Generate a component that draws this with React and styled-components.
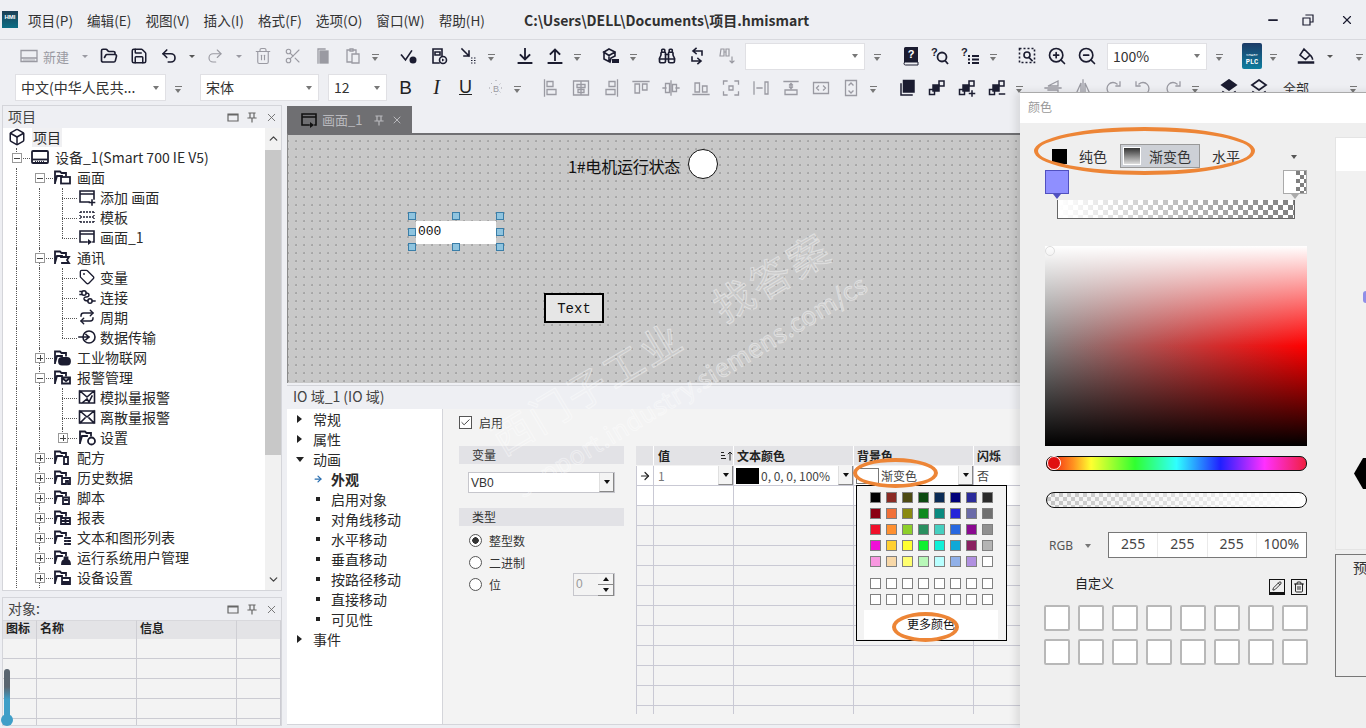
import React from 'react';
import styled, { createGlobalStyle } from 'styled-components';
import {
  Box, FolderOpen, Save, Undo2, Redo2, Trash2, Scissors, Tag, Repeat, ChevronUp, ChevronDown,
  X, Minus, ZoomIn, ZoomOut, Binoculars, Pencil, ArrowRight, Check,
} from 'lucide-react';

const UI_FONT = `"Noto Sans CJK SC", "Noto Sans", sans-serif`;
const INK = '#1b1c30';
const MUTED = '#9a9aa2';

const GlobalStyle = createGlobalStyle`
  html, body { margin: 0; padding: 0; overflow: hidden; }
  body { font-family: ${UI_FONT}; color: #222; background: #eeeff3; }
`;

const Page = styled.div`
  position: relative;
  width: 1366px;
  height: 728px;
  overflow: hidden;
  background: #eeeff3;
  display: flex;
  flex-direction: column;
`;

/* ---------- title bar ---------- */
const TitleBar = styled.header`
  height: 39px;
  flex: none;
  display: flex;
  align-items: center;
  padding-left: 2px;
  border-bottom: 1px solid #d8d9de;
  font-size: 13.6px;
  color: #333;
`;
const Logo = styled.div`
  width: 16px;
  height: 17px;
  background: linear-gradient(180deg, #1c3f55, #0d6f86);
  color: #fff;
  font: bold 6px/7px "Liberation Sans", sans-serif;
  text-align: center;
  padding-top: 3px;
  box-sizing: border-box;
  margin-right: 10px;
`;
const Menu = styled.nav`
  display: flex;
  gap: 14px;
  width: 496px;
`;
const MenuItem = styled.span`
  white-space: nowrap;
`;
const DocPath = styled.strong`
  font-size: 14px;
  font-weight: 700;
  color: #303030;
  white-space: nowrap;
`;
const WindowBtns = styled.div`
  margin-left: auto;
  display: flex;
  align-items: center;
  gap: 22px;
  padding-right: 12px;
  color: #1b1c30;
`;
const CloseSlot = styled.span`
  display: flex;
  margin-left: 4px;
`;

/* ---------- toolbars ---------- */
const ToolRow = styled.div`
  height: ${(p) => p.$h}px;
  flex: none;
  display: flex;
  align-items: center;
`;
const ToolBtn = styled.span`
  width: ${(p) => p.$w || 30}px;
  height: 24px;
  flex: none;
  display: flex;
  align-items: center;
  justify-content: center;
  color: ${(p) => (p.$off ? MUTED : INK)};
  font-size: 13px;
`;
const NewBtn = styled.span`
  width: 64px;
  flex: none;
  padding-left: 8px;
  box-sizing: border-box;
  display: flex;
  align-items: center;
  gap: 5px;
  font-size: 13px;
  color: ${MUTED};
`;
const CaretBtn = styled.span`
  width: ${(p) => p.$w || 16}px;
  flex: none;
  display: flex;
  justify-content: center;
  &::after {
    content: '';
    border: 3px solid transparent;
    border-top: 3px solid ${(p) => (p.$off ? MUTED : '#555')};
    margin-top: 3px;
  }
`;
const Overflow = styled.span`
  width: 14px;
  flex: none;
  margin-left: ${(p) => p.$ml || 0}px;
  display: flex;
  flex-direction: column;
  align-items: center;
  gap: 2px;
  padding-top: 6px;
  &::before { content: ''; width: 7px; height: 1px; background: #777; }
  &::after { content: ''; border: 3.5px solid transparent; border-top: 4px solid #777; }
`;
const Grip = styled.span`
  width: 12px;
  height: 24px;
  flex: none;
  background-image: radial-gradient(#b4b4b8 40%, transparent 45%);
  background-size: 2px 2px;
  background-repeat: repeat;
  background-clip: content-box;
  padding: 0 5px 0 1px;
  box-sizing: border-box;
`;
const Combo = styled.span`
  width: ${(p) => p.$w}px;
  height: 27px;
  flex: none;
  margin-left: ${(p) => p.$ml || 0}px;
  box-sizing: border-box;
  background: #fff;
  border: 1px solid #e0e0e4;
  padding: 0 6px 1px 5px;
  display: flex;
  align-items: center;
  font-size: 14px;
  color: #333;
  white-space: nowrap;
  &::after {
    content: '';
    margin-left: auto;
    border: 3px solid transparent;
    border-top: 4px solid #777;
    margin-top: 4px;
  }
`;
const FormatLetter = styled.span`
  font: ${(p) => p.$font};
  text-decoration: ${(p) => (p.$u ? 'underline' : 'none')};
  color: #222;
`;
const PlcBadge = styled.span`
  width: 20px;
  height: 26px;
  background: linear-gradient(180deg, #1b3a66, #0e7e9f);
  color: #fff;
  border-radius: 2px;
  font: bold 7px/8px "Liberation Mono", monospace;
  display: flex;
  flex-direction: column;
  align-items: center;
  justify-content: flex-end;
  padding-bottom: 3px;
  box-sizing: border-box;
  small { font-size: 4px; line-height: 6px; font-weight: 400; }
`;
const AllLabel = styled.span`
  width: 40px;
  flex: none;
  margin-left: 2px;
  text-align: center;
  font-size: 13px;
  color: #333;
`;

/* ---------- workspace ---------- */
const Workspace = styled.main`
  flex: 1;
  min-height: 0;
  display: flex;
  align-items: stretch;
  padding: 2px 0 2px 2px;
  gap: 5px;
`;
const LeftColumn = styled.aside`
  width: 280px;
  flex: none;
  display: flex;
  flex-direction: column;
  gap: 6px;
`;
const Panel = styled.section`
  border: 1px solid #d4d5da;
  box-sizing: border-box;
  display: flex;
  flex-direction: column;
  height: ${(p) => p.$h}px;
  flex: none;
  min-height: 0;
`;
const PanelHead = styled.div`
  height: 22px;
  flex: none;
  box-sizing: border-box;
  display: flex;
  align-items: center;
  padding: 0 3px 3px 5px;
  font-size: 14px;
  color: #444;
`;
const PanelBtns = styled.span`
  margin-left: auto;
  display: flex;
  align-items: center;
  gap: 7px;
  color: #666;
  padding-top: 3px;
`;
const TreeWrap = styled.div`
  flex: 1;
  min-height: 0;
  display: flex;
  background: #fff;
  overflow: hidden;
`;
const Tree = styled.ul`
  flex: 1;
  list-style: none;
  margin: 0;
  padding: 0;
`;
const TreeRow = styled.li`
  position: relative;
  height: 20px;
  box-sizing: border-box;
  display: flex;
  align-items: center;
  padding: 0 0 2px ${(p) => p.$pad}px;
  font-size: 14px;
  color: #2a2a2a;
  white-space: nowrap;
`;
const Guide = styled.i`
  position: absolute;
  left: ${(p) => p.$x}px;
  top: 0;
  bottom: ${(p) => (p.$half ? '10px' : '0')};
  border-left: 1px dotted #555;
`;
const Branch = styled.i`
  position: absolute;
  left: ${(p) => p.$x}px;
  width: ${(p) => p.$w}px;
  top: 10px;
  border-top: 1px dotted #555;
`;
const Expander = styled.i`
  position: absolute;
  left: ${(p) => p.$x}px;
  top: 5px;
  width: 10px;
  height: 10px;
  box-sizing: border-box;
  border: 1px solid #999;
  background: #fff;
  &::before { content: ''; position: absolute; left: 1px; right: 1px; top: 3.5px; height: 1px; background: #444; }
  &::after {
    content: '';
    display: ${(p) => (p.$open ? 'none' : 'block')};
    position: absolute;
    top: 1px;
    bottom: 1px;
    left: 3.5px;
    width: 1px;
    background: #444;
  }
`;
const TreeIcon = styled.span`
  width: 18px;
  height: 18px;
  flex: none;
  margin-right: ${(p) => p.$gap}px;
  display: flex;
  align-items: center;
  justify-content: center;
  color: ${INK};
`;
const Selected = styled.span`
  background: #f0f0f2;
  padding: 0 1px;
`;
const ScrollBar = styled.div`
  width: 16px;
  flex: none;
  background: #f1f1f1;
  display: flex;
  flex-direction: column;
  align-items: center;
  color: #444;
  padding: 4px 0;
  box-sizing: border-box;
  justify-content: space-between;
`;
const ScrollThumb = styled.div`
  flex: 1;
  align-self: stretch;
  margin: 5px 0 118px;
  background: #c8c8c8;
`;

const ObjectTable = styled.div`
  flex: 1;
  display: grid;
  grid-template-columns: 34px 100px 100px 1fr;
  grid-template-rows: 19px;
  grid-auto-rows: 20px;
  background: #f3f3f3;
  overflow: hidden;
`;
const ObjectHead = styled.div`
  background: #e3e3e6;
  border-right: 1px solid #cfcfd4;
  border-top: 1px solid #d8d8dc;
  font-size: 12px;
  font-weight: 700;
  color: #222;
  padding-left: 3px;
  line-height: 14px;
`;
const ObjectCell = styled.div`
  border-right: 1px solid #cbcbd2;
  border-bottom: 1px solid #cbcbd2;
`;
const Thermo = styled.div`
  position: absolute;
  left: 1px;
  top: 669px;
  width: 12px;
  height: 57px;
  &::before {
    content: '';
    position: absolute;
    left: 3px;
    top: 0;
    bottom: 6px;
    width: 6px;
    border-radius: 3px 3px 0 0;
    background: linear-gradient(180deg, #5a6570 0%, #5a6570 35%, #3f9fc8 60%, #3f9fc8 100%);
  }
  &::after {
    content: '';
    position: absolute;
    left: 0;
    bottom: 0;
    width: 12px;
    height: 12px;
    border-radius: 50%;
    background: #3f9fc8;
  }
`;

/* ---------- editor ---------- */
const CenterColumn = styled.div`
  width: 733px;
  flex: none;
  display: flex;
  flex-direction: column;
  overflow: hidden;
`;
const TabStrip = styled.div`
  height: 27px;
  margin-top: 1px;
  flex: none;
`;
const Tab = styled.div`
  width: 125px;
  height: 100%;
  background: #6f6f72;
  color: #b9b9bd;
  font-size: 13px;
  display: flex;
  align-items: center;
  padding-left: 13px;
  box-sizing: border-box;
`;
const TabIcon = styled.span`
  display: flex;
  margin-right: 4px;
  color: #111;
`;
const TabTools = styled.span`
  display: flex;
  align-items: center;
  gap: 6px;
  margin-left: 11px;
`;
const Canvas = styled.div`
  position: relative;
  height: 250px;
  flex: none;
  box-sizing: border-box;
  border-top: 2px solid #6f6f72;
  border-left: 1px solid #8a8a8a;
  background-color: #c8c8c8;
  background-image: radial-gradient(circle at 1.2px 1.2px, #a6a6a6 0.9px, #cdcdcd 1.4px, transparent 2.4px);
  background-size: 8px 8px;
  background-position: 7px 5px;
  overflow: hidden;
`;
const CanvasText = styled.span`
  position: absolute;
  left: ${(p) => p.$x}px;
  top: ${(p) => p.$y}px;
  font: 16px/20px "Noto Sans CJK SC", sans-serif;
  letter-spacing: -0.2px;
  color: #111;
  white-space: nowrap;
`;
const Lamp = styled.div`
  position: absolute;
  left: 400px;
  top: 14px;
  width: 30px;
  height: 30px;
  box-sizing: border-box;
  border: 1px solid #111;
  border-radius: 50%;
  background: #fff;
`;
const IoField = styled.div`
  position: absolute;
  left: 128px;
  top: 86px;
  width: 80px;
  height: 23px;
  padding-left: 2px;
  box-sizing: border-box;
  background: #fff;
  font: 13px/22px "Liberation Mono", monospace;
  color: #111;
`;
const Handle = styled.i`
  position: absolute;
  left: ${(p) => p.$x}px;
  top: ${(p) => p.$y}px;
  width: 6px;
  height: 6px;
  background: #8fc4df;
  border: 1px solid #3a7ea8;
`;
const TextButton = styled.div`
  position: absolute;
  left: 256px;
  top: 158px;
  width: 60px;
  height: 30px;
  box-sizing: border-box;
  border: 2px solid #000;
  background: #e6e6e6;
  font: 14px/28px "Liberation Mono", monospace;
  text-align: center;
  color: #111;
`;

const Inspector = styled.section`
  flex: 1;
  min-height: 0;
  margin-top: 2px;
  border-top: 1px solid #d4d5da;
  display: flex;
  flex-direction: column;
`;
const InspectorHead = styled.div`
  height: 23px;
  flex: none;
  padding-left: 6px;
  font-size: 14px;
  line-height: 21px;
  color: #444;
`;
const InspectorBody = styled.div`
  flex: 1;
  min-height: 0;
  display: flex;
  border-bottom: 1px solid #d4d5da;
  margin-bottom: 1px;
`;
const NavList = styled.ul`
  width: 155px;
  flex: none;
  margin: 0;
  padding: 0;
  list-style: none;
  background: #fff;
  border-right: 1px solid #d4d5da;
`;
const NavItem = styled.li`
  height: 20px;
  display: flex;
  align-items: center;
  padding-left: ${(p) => (p.$sub ? 27 : 9)}px;
  gap: 10px;
  font-size: 14px;
  font-weight: ${(p) => (p.$active ? 700 : 400)};
  color: #2a2a2a;
`;
const NavSlot = styled.span`
  width: 7px;
  flex: none;
  display: flex;
  align-items: center;
  justify-content: center;
  overflow: visible;
`;
const NavMarker = styled.i`
  flex: none;
  ${(p) => p.$kind === 'square' && 'background: #222; width: 4px; height: 4px;'}
  ${(p) => p.$kind === 'closed' && 'border-left: 5px solid #222; border-top: 4px solid transparent; border-bottom: 4px solid transparent; width: 0; height: 0;'}
  ${(p) => p.$kind === 'open' && 'border-top: 5px solid #222; border-left: 4px solid transparent; border-right: 4px solid transparent; width: 0; height: 0;'}
`;
const NavArrow = styled(ArrowRight)`
  flex: none;
  color: #2a6fb0;
`;
const PropsArea = styled.div`
  flex: 1;
  min-width: 0;
  background: #f3f3f3;
  display: flex;
  gap: 11px;
  padding: 6px 0 0 16px;
  overflow: hidden;
`;
const FormCol = styled.div`
  width: 165px;
  flex: none;
  display: flex;
  flex-direction: column;
  font-size: 12px;
  color: #333;
`;
const CheckRow = styled.label`
  display: flex;
  align-items: center;
  gap: 7px;
  height: 15px;
  margin-bottom: 16px;
`;
const CheckBoxMark = styled.span`
  width: 13px;
  height: 13px;
  box-sizing: border-box;
  border: 1px solid #555;
  background: #fff;
  display: flex;
  align-items: center;
  justify-content: center;
`;
const SectionHead = styled.div`
  height: 18px;
  background: #e2e2e6;
  padding-left: 13px;
  line-height: 18px;
  color: #333;
`;
const SelectBox = styled.div`
  margin: 8px 9px 15px;
  height: 21px;
  box-sizing: border-box;
  background: #fff;
  border: 1px solid #c6c6cc;
  padding-left: 2px;
  display: flex;
  align-items: center;
  justify-content: space-between;
  font: 12px "Liberation Sans", sans-serif;
`;
const DropBtn = styled.span`
  width: ${(p) => p.$w || 15}px;
  align-self: stretch;
  flex: none;
  background: #f4f4f4;
  border-left: 1px solid #e0e0e0;
  border-right: 1px solid #888;
  border-bottom: 1px solid #888;
  box-sizing: border-box;
  display: flex;
  align-items: center;
  justify-content: center;
  &::after { content: ''; border: 3px solid transparent; border-top: 4px solid #111; margin-top: 3px; }
`;
const RadioGroup = styled.div`
  margin-top: 3px;
`;
const RadioRow = styled.div`
  height: 22px;
  display: flex;
  align-items: center;
  gap: 7px;
  padding-left: 10px;
`;
const RadioDot = styled.span`
  width: 13px;
  height: 13px;
  box-sizing: border-box;
  border: 1px solid #555;
  border-radius: 50%;
  background: ${(p) => (p.$on ? 'radial-gradient(circle, #333 3px, #fff 3.5px)' : '#fff')};
`;
const SpinBox = styled.div`
  margin-left: auto;
  margin-right: 9px;
  width: 42px;
  height: 23px;
  box-sizing: border-box;
  border: 1px solid #c6c6cc;
  display: flex;
  justify-content: space-between;
  color: #999;
  padding-left: 2px;
  line-height: 21px;
  font-family: "Liberation Sans", sans-serif;
`;
const SpinBtns = styled.span`
  width: 16px;
  display: flex;
  flex-direction: column;
  flex: none;
`;
const SpinBtn = styled.span`
  flex: 1;
  background: #f4f4f4;
  border-right: 1px solid #888;
  border-bottom: 1px solid #888;
  box-sizing: border-box;
  display: flex;
  align-items: center;
  justify-content: center;
  &::after {
    content: '';
    border: 3px solid transparent;
    ${(p) => (p.$up ? 'border-bottom: 4px solid #111; margin-bottom: 3px;' : 'border-top: 4px solid #111; margin-top: 3px;')}
  }
`;

const Grid = styled.div`
  position: relative;
  flex: 1;
  margin-left: 1px;
  display: grid;
  grid-template-columns: 18px 80px 120px 120px 60px;
  grid-auto-rows: 20px;
  align-content: start;
  margin-top: 31px;
  font-size: 12px;
  color: #222;
`;
const GridHead = styled.div`
  height: 19px;
  background: #e3e3e6;
  border-right: 1px solid #fff;
  font-weight: 700;
  padding-left: ${(p) => p.$pad ?? 3}px;
  line-height: 17px;
  display: flex;
  justify-content: space-between;
  align-items: center;
  white-space: nowrap;
`;
const GridCell = styled.div`
  height: 20px;
  box-sizing: border-box;
  display: flex;
  align-items: center;
  background: ${(p) => (p.$white ? '#fff' : 'transparent')};
  border-right: 1px solid #c9c9d4;
  border-bottom: 1px solid #c9c9d4;
  border-left: ${(p) => (p.$first ? '1px solid #c9c9d4' : '0')};
  padding-left: ${(p) => p.$pad ?? 3}px;
  white-space: nowrap;
`;
const GridStub = styled.div`
  height: 8px;
  box-sizing: border-box;
  border-right: 1px solid #c9c9d4;
  border-left: ${(p) => (p.$first ? '1px solid #c9c9d4' : '0')};
`;
const CellText = styled.span`
  flex: 1;
  color: ${(p) => p.$c || '#444'};
  font-family: ${UI_FONT};
`;
const ColorChip = styled.span`
  width: 23px;
  height: 16px;
  flex: none;
  margin-right: 2px;
  background: ${(p) => p.$c};
  border: 1px solid ${(p) => (p.$c === '#000' ? '#000' : '#777')};
  box-sizing: border-box;
`;
const Palette = styled.div`
  position: absolute;
  left: 220px;
  top: 39px;
  width: 151px;
  height: 156px;
  box-sizing: border-box;
  border: 1px solid #000;
  background: #f3f3f3;
  padding: 6px 0 0 13px;
  z-index: 2;
`;
const SwatchGrid = styled.div`
  display: grid;
  grid-template-columns: repeat(8, 11px);
  gap: 5px;
  margin-bottom: ${(p) => p.$mb || 0}px;
`;
const Swatch = styled.i`
  width: 11px;
  height: 11px;
  box-sizing: border-box;
  border: 1px solid #808080;
  background: ${(p) => p.$c};
`;
const MoreColors = styled.div`
  margin: 5px 0 0 -6px;
  width: 134px;
  height: 29px;
  background: #fff;
  font-size: 12px;
  text-align: center;
  line-height: 27px;
  color: #111;
`;

/* ---------- watermark & annotations ---------- */
const Watermark = styled.div`
  position: absolute;
  left: ${(p) => p.$x}px;
  top: ${(p) => p.$y}px;
  transform: rotate(-31deg);
  transform-origin: left bottom;
  font-family: ${UI_FONT};
  font-size: ${(p) => p.$size}px;
  line-height: ${(p) => p.$size + 12}px;
  letter-spacing: ${(p) => p.$track}px;
  color: rgba(255, 255, 255, 0.06);
  -webkit-text-stroke: 1px rgba(255, 255, 255, 0.42);
  white-space: nowrap;
  pointer-events: none;
`;
const Ring = styled.div`
  position: absolute;
  left: ${(p) => p.$x}px;
  top: ${(p) => p.$y}px;
  width: ${(p) => p.$w}px;
  height: ${(p) => p.$h}px;
  box-sizing: border-box;
  border: 4px solid #ed8536;
  border-radius: 50%;
  z-index: 6;
  pointer-events: none;
`;

/* ---------- colour dialog ---------- */
const Dialog = styled.div`
  position: absolute;
  left: 1020px;
  top: 92px;
  width: 360px;
  height: 636px;
  background: #efefef;
  box-shadow: -4px 0 8px rgba(0, 0, 0, 0.1);
  border-top: 1px solid #aaa;
  box-sizing: border-box;
  z-index: 5;
  display: flex;
  flex-direction: column;
`;
const DialogTitle = styled.div`
  height: 30px;
  flex: none;
  background: #fff;
  padding-left: 8px;
  font-size: 12px;
  line-height: 27px;
  color: #999;
`;
const DialogBody = styled.div`
  flex: 1;
  display: flex;
`;
const PickerCol = styled.div`
  width: 315px;
  flex: none;
  padding: 21px 0 0 25px;
  box-sizing: border-box;
`;
const ModeRow = styled.div`
  display: flex;
  align-items: center;
  height: 24px;
  font-size: 14px;
  color: #333;
  width: 262px;
`;
const ModeChip = styled.i`
  width: 15px;
  height: 15px;
  margin: 0 12px 0 7px;
  flex: none;
  background: #000;
`;
const ModeActive = styled.span`
  width: 80px;
  height: 24px;
  margin: 0 12px 0 13px;
  flex: none;
  box-sizing: border-box;
  background: #cdd0d6;
  border: 1px solid #999;
  display: flex;
  align-items: center;
  gap: 8px;
  padding-left: 2px;
`;
const GradientChip = styled.i`
  width: 16px;
  height: 16px;
  flex: none;
  background: linear-gradient(180deg, #333, #ddd);
  border: 1px solid #fff;
`;
const ModeCaret = styled.span`
  margin-left: auto;
  margin-right: 10px;
  border: 3px solid transparent;
  border-top: 4px solid #555;
  margin-top: 4px;
`;
const StopRow = styled.div`
  display: flex;
  justify-content: space-between;
  width: 262px;
  margin-top: 2px;
  height: 30px;
`;
const Stop = styled.div`
  position: relative;
  width: 24px;
  height: 24px;
  box-sizing: border-box;
  border: 1px solid ${(p) => p.$line};
  background: ${(p) => p.$fill};
  background-size: 100% 100%, 8px 8px;
  &::after {
    content: '';
    position: absolute;
    left: 7px;
    top: 23px;
    border: 4px solid transparent;
    border-top: 5px solid ${(p) => p.$line};
  }
`;
const CHECKER = `repeating-conic-gradient(#808080 0 25%, #fff 0 50%)`;
const CHECKER_SOFT = `repeating-conic-gradient(#c4c4c4 0 25%, #f4f4f4 0 50%)`;
const RampBar = styled.div`
  width: 238px;
  height: 19px;
  margin: 0 0 27px 12px;
  box-sizing: border-box;
  border: 1px solid #666;
  border-width: 0 1px 1px 1px;
  background: linear-gradient(90deg, #fff 0%, rgba(255, 255, 255, 0) 100%), ${CHECKER};
  background-size: 100% 100%, 10px 10px;
`;
const ColorField = styled.div`
  width: 262px;
  height: 200px;
  position: relative;
  background:
    linear-gradient(180deg, rgba(255, 255, 255, 1) 0%, rgba(255, 255, 255, 0) 50%, rgba(0, 0, 0, 0) 50%, rgba(0, 0, 0, 1) 100%),
    linear-gradient(90deg, #808080, #ff0000);
`;
const FieldKnob = styled.i`
  position: absolute;
  left: 0;
  top: 0;
  width: 8px;
  height: 8px;
  border-radius: 50%;
  border: 1px solid #ddd;
`;
const HueBar = styled.div`
  position: relative;
  width: 261px;
  height: 15px;
  margin: 10px 0 21px 1px;
  box-sizing: border-box;
  border: 1px solid #111;
  border-radius: 7px;
  background: linear-gradient(90deg, #f01010, #ff9020 10%, #ffff30 17%, #30ff30 34%, #30ffff 50%, #2020ff 67%, #ff30ff 84%, #f02040);
  &::before {
    content: '';
    position: absolute;
    left: 0;
    top: -1px;
    width: 14px;
    height: 14px;
    box-sizing: border-box;
    border-radius: 50%;
    background: #e01010;
    border: 1px solid #fff;
  }
`;
const AlphaBar = styled.div`
  width: 261px;
  height: 16px;
  box-sizing: border-box;
  border: 1px solid #111;
  border-radius: 8px;
  background: linear-gradient(90deg, rgba(255, 255, 255, 0), #fff), ${CHECKER_SOFT};
  background-size: 100% 100%, 8px 8px;
  margin: 0 0 24px 1px;
`;
const RgbRow = styled.div`
  display: flex;
  align-items: center;
  width: 262px;
  height: 26px;
  font: 12px "Noto Sans", sans-serif;
  color: #555;
`;
const RgbLabel = styled.span`
  width: 63px;
  flex: none;
  display: flex;
  align-items: center;
  gap: 12px;
  padding-left: 4px;
  box-sizing: border-box;
  &::after { content: ''; border: 3px solid transparent; border-top: 4px solid #777; margin-top: 4px; }
`;
const RgbFields = styled.div`
  flex: 1;
  height: 26px;
  display: grid;
  grid-template-columns: repeat(4, 1fr);
  background: #fff;
  border: 1px solid #777;
  box-sizing: border-box;
`;
const RgbField = styled.span`
  border-right: 1px solid #eaeaea;
  text-align: center;
  font-size: 14px;
  line-height: 21px;
  color: #444;
  &:last-child { border-right: 0; }
`;
const CustomHead = styled.div`
  display: flex;
  align-items: center;
  width: 262px;
  margin-top: 21px;
  height: 16px;
  font-size: 13px;
  color: #222;
  padding-left: 30px;
  box-sizing: border-box;
  gap: 6px;
`;
const CustomLabel = styled.span`
  margin: -9px auto 0 0;
`;
const EditBtn = styled.span`
  width: 16px;
  height: 16px;
  box-sizing: border-box;
  border: 1px solid #111;
  border-bottom-width: ${(p) => (p.$thick ? 3 : 1)}px;
  display: flex;
  align-items: center;
  justify-content: center;
  color: #111;
`;
const CustomGrid = styled.div`
  display: grid;
  grid-template-columns: repeat(8, 26px);
  grid-auto-rows: 26px;
  gap: 8px;
  margin: 10px 0 0 -1px;
`;
const CustomSlot = styled.i`
  box-sizing: border-box;
  background: #fff;
  border: 2px solid #b8b8b8;
  border-radius: 2px;
`;
const PreviewCol = styled.div`
  flex: 1;
  display: flex;
  flex-direction: column;
  padding-top: 14px;
`;
const PreviewPanel = styled.div`
  position: relative;
  height: 413px;
  box-sizing: border-box;
  background: linear-gradient(180deg, #fff 0, #fff 33px, #f1f1f1 33px);
  border: 1px solid #e4e4e4;
`;
const PurpleDot = styled.i`
  position: absolute;
  left: 27px;
  top: 153px;
  width: 10px;
  height: 12px;
  border-radius: 3px;
  background: #8f8fe8;
`;
const Hexagon = styled.i`
  position: absolute;
  left: 18px;
  top: 320px;
  width: 30px;
  height: 31px;
  background: #000;
  clip-path: polygon(30% 0, 70% 0, 100% 50%, 70% 100%, 30% 100%, 0 50%);
`;
const PreviewBox = styled.div`
  margin-top: 4px;
  height: 123px;
  box-sizing: border-box;
  border: 1px solid #777;
  padding: 2px 0 0 17px;
  font-size: 14px;
  color: #333;
  white-space: nowrap;
`;

/* ---------- hand drawn glyphs ---------- */
const Glyph = ({ size = 18, vb = 18, sw = 1.6, children }) => (
  <svg width={size} height={size} viewBox={`0 0 ${vb} ${vb}`} fill="none" stroke="currentColor" strokeWidth={sw} strokeLinecap="square">
    {children}
  </svg>
);

const FOLDER = 'M2 15V3.5h5L8.5 5H13v2.5M2 15l2-7h5';
const badges = {
  screens: <rect x="8" y="9" width="9" height="6.5" />,
  comm: <path d="M8 9h8l-2 3 2 3H9" />,
  iot: <rect x="6" y="10" width="11" height="6.5" rx="3" fill="currentColor" />,
  alarm: <path d="M9 9.5h8v6H9zM9 10l4 3 4-3" />,
  gear: <circle cx="13.5" cy="13" r="3.5" />,
  recipe: <path d="M11 9h4v7h-4z" />,
  history: <path d="M9 10h8v6h-2v-3h-2v3H9z" />,
  script: <path d="M10 9.5h6v6.5h-6zM12 12h2" />,
  report: <path d="M8 10h9v6H8zM8 13h9M12.5 10v6" />,
  list: <path d="M12 10h1M15 10h2M12 13h1M15 13h2M12 16h1M15 16h2" />,
  user: <path d="M9 16c0-3 1.5-4 4-4s4 1 4 4zM11.5 9.5h3V12h-3z" fill="currentColor" />,
  device: <path d="M9 10h8v6H9zM9 14h8" />,
};
const FolderIcon = ({ kind }) => (
  <Glyph sw={1.8}>
    <path d={FOLDER} />
    {badges[kind]}
  </Glyph>
);
const DeviceIcon = () => (
  <Glyph sw={1.8}>
    <rect x="1" y="3" width="16" height="12" rx="1" />
    <path d="M2 11.5h14" />
    <path d="M4 13.4h10" strokeDasharray="1 1" strokeWidth="1" strokeLinecap="butt" />
  </Glyph>
);
const ScreenPlus = () => (
  <Glyph>
    <path d="M11 14H2V3h14v8M2 6h14" />
    <path d="M14 12v5M11.5 14.5h5" />
  </Glyph>
);
const TemplateIcon = () => (
  <Glyph sw={1.4}>
    <path d="M2 4h14M2 9h14M2 14h14" strokeDasharray="2 1" strokeLinecap="butt" />
    <path d="M2 4v10M16 4v10" strokeDasharray="1 2" strokeLinecap="butt" />
  </Glyph>
);
const ScreenRun = () => (
  <Glyph>
    <path d="M9 14H2V3h14v11h-1M2 6h14" />
    <path d="M10 11l4 3-4 3z" fill="currentColor" stroke="none" />
  </Glyph>
);
const ConnectIcon = () => (
  <Glyph sw={1.4}>
    <circle cx="6" cy="5" r="2.2" />
    <circle cx="12" cy="13" r="2.2" />
    <path d="M2 3.5h2M2 6.5h2M8 5c4 0 4 4 0 4-3 0-3 4 2 4M14 13h3" />
  </Glyph>
);
const TransferIcon = () => (
  <Glyph>
    <circle cx="11" cy="9" r="6" />
    <path d="M1 9h10M8 6.5L11 9l-3 2.5" />
  </Glyph>
);
const AlarmAnalog = () => (
  <Glyph>
    <path d="M1.5 3h15v12H1.5zM2 3l7 6 7-6M4 15l5-4 2 3 3-6" />
  </Glyph>
);
const AlarmPlain = () => (
  <Glyph>
    <path d="M1.5 3h15v12H1.5zM2 3l7 6 7-6M2 15l5-5M16 15l-5-5" />
  </Glyph>
);
const Win = ({ kind }) => (
  <Glyph size={12} vb={12} sw={1.2}>
    {kind === 'box' && <path d="M1 3h10v7H1zM1 4h10" />}
    {kind === 'pin' && <path d="M3 2h6M4 2v5h4V2M2 7h8M6 7v4" />}
    {kind === 'restore' && <path d="M4 1h7v7H8.5M1 4h7v7H1z" />}
  </Glyph>
);
const SortMark = () => (
  <svg width="12" height="10" viewBox="0 0 12 10" fill="none" stroke="#222" strokeWidth="1">
    <path d="M0 1.5h3M0 4.5h4M0 7.5h5M9 9.5V1M6.8 3.2L9 1l2.2 2.2" />
  </svg>
);
const NewDoc = () => (
  <Glyph sw={1.3}>
    <path d="M1 3.5h16v11H1zM1 11h16" />
    <path d="M3.5 13h11" strokeDasharray="1 1" strokeLinecap="butt" />
  </Glyph>
);
const Copy2 = () => (
  <Glyph sw={1.3}>
    <path d="M4 2h7M4 2v14" />
    <rect x="6" y="4" width="8" height="12" fill="currentColor" />
  </Glyph>
);
const Paste2 = () => (
  <Glyph sw={1.3}>
    <path d="M7 15H3V3h3M9 3h3v3M6 2h3v2H6zM8 7h7v9H8z" />
  </Glyph>
);
const CheckHelp = () => (
  <Glyph>
    <path d="M1.5 8l4 5 6-9" />
    <circle cx="13" cy="13" r="3.5" fill="currentColor" stroke="none" />
  </Glyph>
);
const RunDoc = () => (
  <Glyph>
    <path d="M9 16H3V2h9v7M5 5h5v3H5z" />
    <circle cx="13" cy="13" r="3.5" />
    <path d="M12 11.5l2.5 1.5-2.5 1.5z" fill="currentColor" stroke="none" />
  </Glyph>
);
const Jump = () => (
  <Glyph>
    <path d="M2 2l7 7M9 4v5H4" />
    <path d="M11 11h1.5M14 11h1.5M11 13.5h1.5M14 13.5h1.5M11 16h1.5M14 16h1.5" strokeWidth="1" strokeLinecap="butt" />
  </Glyph>
);
const LoadDown = () => (
  <Glyph sw={1.8}>
    <path d="M9 2v10M4.5 8L9 12.5 13.5 8M2.5 16h13" />
  </Glyph>
);
const LoadUp = () => (
  <Glyph sw={1.8}>
    <path d="M9 13V3M4.5 7L9 2.5 13.5 7M2.5 16h13" />
  </Glyph>
);
const PackageRun = () => (
  <Glyph>
    <path d="M7 2l6 3v4l-4 2-1 4-6-3V5zM1.5 5L7 8.5 13 5M7 8.5V14" />
    <path d="M10 12h7v4h-7z" fill="currentColor" stroke="none" />
  </Glyph>
);
const Swap = () => (
  <Glyph>
    <path d="M14 8V4H6M8 1.5L5 4l3 2.5M4 10v4h8M10 11.5l3 2.5-3 2.5" />
  </Glyph>
);
const FindMuted = () => (
  <Glyph sw={1.2}>
    <path d="M3 2h3v7H2zM8 2h3v7H8zM6 5h2M14 10v6M12 14l2 2 2-2" />
  </Glyph>
);
const BookHelp = () => (
  <svg width="18" height="20" viewBox="0 0 18 20">
    <path d="M2 2.5A1.5 1.5 0 0 1 3.5 1H16v15H3.5A1.5 1.5 0 0 0 2 17.5z" fill="currentColor" />
    <path d="M2 17.5A1.5 1.5 0 0 1 3.5 16H16v3H3.5A1.5 1.5 0 0 1 2 17.5z" fill="none" stroke="currentColor" />
    <text x="9" y="12" fill="#fff" fontSize="11" fontWeight="700" textAnchor="middle" fontFamily="Liberation Sans">?</text>
  </svg>
);
const HelpFind = () => (
  <svg width="20" height="18" viewBox="0 0 20 18" fill="none" stroke="currentColor" strokeWidth="1.8">
    <text x="0" y="9" fill="currentColor" stroke="none" fontSize="11" fontWeight="700" fontFamily="Liberation Sans">?</text>
    <circle cx="11" cy="10" r="4.5" />
    <path d="M14 13.5l3 3.5" />
  </svg>
);
const HelpList = () => (
  <svg width="20" height="18" viewBox="0 0 20 18" fill="none" stroke="currentColor" strokeWidth="1.8">
    <text x="0" y="9" fill="currentColor" stroke="none" fontSize="11" fontWeight="700" fontFamily="Liberation Sans">?</text>
    <path d="M7 9h2M11 9h7M7 12.5h2M11 12.5h7M7 16h2M11 16h7" />
  </svg>
);
const FitZoom = () => (
  <Glyph sw={1.6}>
    <path d="M1.5 1.5h15v14h-15z" strokeDasharray="2 2" strokeLinecap="butt" />
    <circle cx="9" cy="8" r="3" />
    <path d="M11 10.5l3 3" />
  </Glyph>
);
const Bucket = () => (
  <Glyph>
    <path d="M7 2l6 6-4.5 4.5L3 8zM14 9c1 1.5 1.5 2 1.5 3" />
    <path d="M2 15.5h14" strokeWidth="2.5" />
  </Glyph>
);
const Highlight = () => (
  <Glyph sw={1}>
    <path d="M9 1v2M9 15v2M2 9h2M14 9h2M4 4l1.4 1.4M12.6 12.6L14 14M4 14l1.4-1.4M12.6 5.4L14 4" strokeDasharray="1 1" strokeLinecap="butt" />
    <text x="9" y="12.5" fontSize="9" textAnchor="middle" fill="currentColor" stroke="none" fontFamily="Liberation Sans">B</text>
  </Glyph>
);
const alignPaths = {
  left: 'M2.5 1v16M5 2.5h6v5H5zM5 10.5h9v5H5z',
  center: 'M1.5 2h15v14h-15zM9 2v14M5 5.5h8v3H5zM6 10.5h6v3H6z',
  right: 'M15.5 1v16M7 2.5h6v5H7zM4 10.5h9v5H4z',
  top: 'M1 2.5h16M3 5h4.5v9H3zM10.5 5H15v6h-4.5z',
  middle: 'M1 9h3M14 9h3M9 2v14M3.5 4.5h4v9h-4zM10.5 5.5h4v7h-4z',
  bottom: 'M1 15.5h16M3 4h4.5v9H3zM10.5 7H15v6h-4.5z',
  target: 'M1.5 5V2H5M13 2h3.5v3M1.5 13v3H5M13 16h3.5v-3M7 7h4v4H7z',
  widthEq: 'M2 3v12M5 9h3M10 9h-1M13 3h3v12h-3z',
  heightEq: 'M2 2.5h14M3 11h12v4.5H3zM9 5v4M7.5 6L9 4.5 10.5 6M7.5 8L9 9.5 10.5 8',
  hArrows: 'M1.5 3.5h15v11h-15zM6.5 7L4.5 9l2 2M11.5 7l2 2-2 2',
  vArrows: 'M3.5 1.5h11v15h-11zM7 6l2-2 2 2M7 12l2 2 2-2',
};
const Align = ({ k }) => (
  <Glyph sw={1.3}>
    <path d={alignPaths[k]} />
  </Glyph>
);
const LayerFront = () => (
  <Glyph sw={1.5}>
    <path d="M3 5v11h11" />
    <rect x="5.5" y="1.5" width="10.5" height="11.5" fill="currentColor" />
  </Glyph>
);
const Group = ({ mark }) => (
  <Glyph sw={1.5}>
    <rect x="1.5" y="10.5" width="5" height="5" />
    <rect x="5" y="6" width="6" height="6" fill="currentColor" />
    <rect x="11" y="2" width="5" height="5" />
    {mark === 'plus' && <path d="M14 12v5M11.5 14.5h5" />}
    {mark === 'minus' && <path d="M11.5 15h5" />}
  </Glyph>
);
const FlipTri = () => (
  <Glyph sw={1.3}>
    <path d="M1 9h16M4 7l10-5v5zM4 11h10v4" />
  </Glyph>
);
const FlipV = () => (
  <Glyph sw={1.3}>
    <path d="M9 1v16M7 15H2l5-11zM11 4l5 11h-5z" />
  </Glyph>
);
const Rot = ({ flip }) => (
  <Glyph sw={1.3}>
    <path d={flip ? 'M5 5a6 6 0 1 1 0 9M2 3v4h4' : 'M13 5a6 6 0 1 0 0 9M16 3v4h-4'} />
  </Glyph>
);
const Layers = ({ fill }) => (
  <Glyph sw={1.8}>
    <path d="M9 1l7 5-7 5-7-5z" fill={fill ? 'currentColor' : 'none'} />
    <path d="M3 13l6 4 6-4" />
  </Glyph>
);

// tree indents: pad / icon gap per depth, guides are the dotted verticals
const DEPTH = {
  device: { pad: 28, gap: 6, branch: [21, 9], exp: 12 },
  group: { pad: 50, gap: 6, branch: [44, 9], exp: 35 },
  leaf: { pad: 75, gap: 4, branch: [62, 15] },
};
const G2 = [[16], [39]];
const G3 = [[16], [39], [62]];
const G3End = [[16], [39], [62, true]];

const TREE = [
  { d: 'device', icon: <DeviceIcon />, label: '设备_1(Smart 700 IE V5)', guides: [[16, true]], open: true },
  { d: 'group', icon: <FolderIcon kind="screens" />, label: '画面', guides: [[16]], open: true },
  { d: 'leaf', icon: <ScreenPlus />, label: '添加 画面', guides: G3 },
  { d: 'leaf', icon: <TemplateIcon />, label: '模板', guides: G3 },
  { d: 'leaf', icon: <ScreenRun />, label: '画面_1', guides: G3End },
  { d: 'group', icon: <FolderIcon kind="comm" />, label: '通讯', guides: G2, open: true },
  { d: 'leaf', icon: <Tag size={16} strokeWidth={2} />, label: '变量', guides: G3 },
  { d: 'leaf', icon: <ConnectIcon />, label: '连接', guides: G3 },
  { d: 'leaf', icon: <Repeat size={16} strokeWidth={2.2} />, label: '周期', guides: G3 },
  { d: 'leaf', icon: <TransferIcon />, label: '数据传输', guides: G3End },
  { d: 'group', icon: <FolderIcon kind="iot" />, label: '工业物联网', guides: G2 },
  { d: 'group', icon: <FolderIcon kind="alarm" />, label: '报警管理', guides: G2, open: true },
  { d: 'leaf', icon: <AlarmAnalog />, label: '模拟量报警', guides: G3 },
  { d: 'leaf', icon: <AlarmPlain />, label: '离散量报警', guides: G3 },
  { d: 'leaf', icon: <FolderIcon kind="gear" />, label: '设置', guides: G3End, branch: [67, 10], exp: 58 },
  { d: 'group', icon: <FolderIcon kind="recipe" />, label: '配方', guides: G2 },
  { d: 'group', icon: <FolderIcon kind="history" />, label: '历史数据', guides: G2 },
  { d: 'group', icon: <FolderIcon kind="script" />, label: '脚本', guides: G2 },
  { d: 'group', icon: <FolderIcon kind="report" />, label: '报表', guides: G2 },
  { d: 'group', icon: <FolderIcon kind="list" />, label: '文本和图形列表', guides: G2 },
  { d: 'group', icon: <FolderIcon kind="user" />, label: '运行系统用户管理', guides: G2 },
  { d: 'group', icon: <FolderIcon kind="device" />, label: '设备设置', guides: G2 },
];

const NAV = [
  { kind: 'closed', label: '常规' },
  { kind: 'closed', label: '属性' },
  { kind: 'open', label: '动画' },
  { kind: 'arrow', label: '外观', sub: true, active: true },
  { kind: 'square', label: '启用对象', sub: true },
  { kind: 'square', label: '对角线移动', sub: true },
  { kind: 'square', label: '水平移动', sub: true },
  { kind: 'square', label: '垂直移动', sub: true },
  { kind: 'square', label: '按路径移动', sub: true },
  { kind: 'square', label: '直接移动', sub: true },
  { kind: 'square', label: '可见性', sub: true },
  { kind: 'closed', label: '事件' },
];

const PALETTE = [
  '#000000', '#8a2a24', '#4d4a12', '#0c4a10', '#0a2b55', '#00007a', '#2a2a9a', '#2a2a2a',
  '#8b0012', '#f07038', '#8a8a10', '#0f8a1e', '#0a8a80', '#2626d8', '#6a6aa8', '#707070',
  '#f0102a', '#ff9030', '#8ecf2a', '#2a9060', '#45cfc0', '#2868e0', '#8a0a90', '#909090',
  '#f010d8', '#ffd030', '#ffff30', '#10f030', '#10f0d8', '#10a8d8', '#8a2060', '#b4b4b4',
  '#f898e0', '#f8d8a8', '#ffff70', '#b8f8b8', '#b8ffff', '#90b0e8', '#b090e0', '#ffffff',
];

const MENU = ['项目(P)', '编辑(E)', '视图(V)', '插入(I)', '格式(F)', '选项(O)', '窗口(W)', '帮助(H)'];

function Toolbars() {
  return (
    <>
      <ToolRow $h={32}>
        <Grip />
        <NewBtn><NewDoc />新建</NewBtn>
        <CaretBtn $w={18} $off />
        <ToolBtn><FolderOpen size={18} strokeWidth={2.2} /></ToolBtn>
        <ToolBtn><Save size={18} strokeWidth={2} /></ToolBtn>
        <ToolBtn><Undo2 size={18} strokeWidth={2.2} /></ToolBtn>
        <CaretBtn />
        <ToolBtn $off><Redo2 size={18} strokeWidth={1.5} /></ToolBtn>
        <CaretBtn $w={18} $off />
        <ToolBtn $off><Trash2 size={18} strokeWidth={1.5} /></ToolBtn>
        <ToolBtn $off><Scissors size={18} strokeWidth={1.5} /></ToolBtn>
        <ToolBtn $off><Copy2 /></ToolBtn>
        <ToolBtn $off><Paste2 /></ToolBtn>
        <Overflow /><Grip />
        <ToolBtn><CheckHelp /></ToolBtn>
        <ToolBtn><RunDoc /></ToolBtn>
        <ToolBtn><Jump /></ToolBtn>
        <Overflow /><Grip />
        <ToolBtn><LoadDown /></ToolBtn>
        <ToolBtn><LoadUp /></ToolBtn>
        <Overflow /><Grip />
        <ToolBtn><PackageRun /></ToolBtn>
        <Overflow /><Grip />
        <ToolBtn><Binoculars size={18} strokeWidth={2.2} /></ToolBtn>
        <ToolBtn><Swap /></ToolBtn>
        <ToolBtn $off><FindMuted /></ToolBtn>
        <Combo $w={120} $ml={3} />
        <Overflow $ml={5} /><Grip />
        <ToolBtn><BookHelp /></ToolBtn>
        <ToolBtn><HelpFind /></ToolBtn>
        <ToolBtn><HelpList /></ToolBtn>
        <Overflow /><Grip />
        <ToolBtn><FitZoom /></ToolBtn>
        <ToolBtn><ZoomIn size={20} strokeWidth={2} /></ToolBtn>
        <ToolBtn><ZoomOut size={20} strokeWidth={2} /></ToolBtn>
        <Combo $w={100} $ml={5}>100%</Combo>
        <Overflow $ml={5} /><Grip />
        <ToolBtn $w={28}><PlcBadge><small>SMART</small>PLC</PlcBadge></ToolBtn>
        <Overflow /><Grip />
        <ToolBtn $w={28}><Bucket /></ToolBtn>
        <CaretBtn $w={20} />
        <Overflow $ml={12} />
      </ToolRow>
      <ToolRow $h={31}>
        <Grip />
        <Combo $w={151} $ml={3}>中文(中华人民共...</Combo>
        <Overflow $ml={5} /><Grip />
        <Combo $w={119} $ml={3}>宋体</Combo>
        <Combo $w={59} $ml={9}>12</Combo>
        <ToolBtn $w={37}><FormatLetter $font='19px "Liberation Sans"'>B</FormatLetter></ToolBtn>
        <ToolBtn $w={25}><FormatLetter $font='italic 20px "Liberation Serif"'>I</FormatLetter></ToolBtn>
        <ToolBtn $w={33}><FormatLetter $u $font='18px "Liberation Sans"'>U</FormatLetter></ToolBtn>
        <ToolBtn $off $w={28}><Highlight /></ToolBtn>
        <Overflow /><Grip />
        <ToolBtn $off><Align k="left" /></ToolBtn>
        <ToolBtn $off><Align k="center" /></ToolBtn>
        <ToolBtn $off><Align k="right" /></ToolBtn>
        <ToolBtn $off><Align k="top" /></ToolBtn>
        <ToolBtn $off><Align k="middle" /></ToolBtn>
        <ToolBtn $off><Align k="bottom" /></ToolBtn>
        <ToolBtn $off><Align k="target" /></ToolBtn>
        <ToolBtn $off><Align k="widthEq" /></ToolBtn>
        <ToolBtn $off><Align k="heightEq" /></ToolBtn>
        <ToolBtn $off><Align k="hArrows" /></ToolBtn>
        <ToolBtn $off><Align k="vArrows" /></ToolBtn>
        <Overflow /><Grip />
        <ToolBtn><LayerFront /></ToolBtn>
        <ToolBtn><Group /></ToolBtn>
        <ToolBtn><Group mark="plus" /></ToolBtn>
        <ToolBtn><Group mark="minus" /></ToolBtn>
        <Overflow /><Grip />
        <ToolBtn $off><FlipTri /></ToolBtn>
        <ToolBtn $off><FlipV /></ToolBtn>
        <ToolBtn $off><Rot /></ToolBtn>
        <ToolBtn $off><Rot flip /></ToolBtn>
        <ToolBtn $off><Rot /></ToolBtn>
        <Overflow /><Grip />
        <ToolBtn><Layers fill /></ToolBtn>
        <ToolBtn><Layers /></ToolBtn>
        <AllLabel>全部</AllLabel>
        <Overflow $ml={30} />
      </ToolRow>
    </>
  );
}

function ProjectPanel() {
  return (
    <Panel $h={486}>
      <PanelHead>
        项目
        <PanelBtns>
          <Win kind="box" /><Win kind="pin" /><X size={13} strokeWidth={1.6} />
        </PanelBtns>
      </PanelHead>
      <TreeWrap>
        <Tree>
          <TreeRow $pad={5}>
            <TreeIcon $gap={6}><Box size={18} strokeWidth={2} /></TreeIcon>
            <Selected>项目</Selected>
          </TreeRow>
          {TREE.map((r) => {
            const depth = DEPTH[r.d];
            const branch = r.branch || depth.branch;
            const exp = r.exp || depth.exp;
            return (
              <TreeRow key={r.label} $pad={depth.pad}>
                {r.guides.map(([x, half]) => <Guide key={x} $x={x - 3} $half={half} />)}
                <Branch $x={branch[0] - 3} $w={branch[1]} />
                {exp && <Expander $x={exp - 3} $open={r.open} />}
                <TreeIcon $gap={depth.gap}>{r.icon}</TreeIcon>
                {r.label}
              </TreeRow>
            );
          })}
        </Tree>
        <ScrollBar>
          <ChevronUp size={13} strokeWidth={2.4} />
          <ScrollThumb />
          <ChevronDown size={13} strokeWidth={2.4} />
        </ScrollBar>
      </TreeWrap>
    </Panel>
  );
}

function ObjectPanel() {
  return (
    <Panel $h={129}>
      <PanelHead>
        对象:
        <PanelBtns>
          <Win kind="box" /><Win kind="pin" /><X size={13} strokeWidth={1.6} />
        </PanelBtns>
      </PanelHead>
      <ObjectTable>
        <ObjectHead>图标</ObjectHead>
        <ObjectHead>名称</ObjectHead>
        <ObjectHead>信息</ObjectHead>
        <ObjectHead />
        {Array.from({ length: 20 }, (_, i) => <ObjectCell key={i} />)}
      </ObjectTable>
    </Panel>
  );
}

function CanvasView() {
  const handles = [[120, 77], [164, 77], [208, 77], [120, 93], [208, 93], [120, 108], [164, 108], [208, 108]];
  return (
    <Canvas>
      <CanvasText $x={280} $y={21}>1#电机运行状态</CanvasText>
      <Lamp />
      <IoField>000</IoField>
      {handles.map(([x, y]) => <Handle key={`${x}-${y}`} $x={x} $y={y} />)}
      <TextButton>Text</TextButton>
    </Canvas>
  );
}

function PropertyForm() {
  return (
    <FormCol>
      <CheckRow>
        <CheckBoxMark><Check size={11} strokeWidth={2} /></CheckBoxMark>
        启用
      </CheckRow>
      <SectionHead>变量</SectionHead>
      <SelectBox>VB0<DropBtn /></SelectBox>
      <SectionHead>类型</SectionHead>
      <RadioGroup>
        <RadioRow><RadioDot $on />整型数</RadioRow>
        <RadioRow><RadioDot />二进制</RadioRow>
        <RadioRow>
          <RadioDot />位
          <SpinBox>0<SpinBtns><SpinBtn $up /><SpinBtn /></SpinBtns></SpinBox>
        </RadioRow>
      </RadioGroup>
    </FormCol>
  );
}

function AppearanceGrid() {
  const emptyRows = 11;
  return (
    <Grid>
      <GridHead />
      <GridHead $pad={4}>值<SortMark /></GridHead>
      <GridHead>文本颜色</GridHead>
      <GridHead>背景色</GridHead>
      <GridHead>闪烁</GridHead>

      <GridCell $first $white $pad={2}><ArrowRight size={12} strokeWidth={2.4} /></GridCell>
      <GridCell $white $pad={4}><CellText $c="#777">1</CellText><DropBtn /></GridCell>
      <GridCell $white $pad={2}><ColorChip $c="#000" /><CellText>0, 0, 0, 100%</CellText><DropBtn /></GridCell>
      <GridCell $white $pad={2}><ColorChip $c="#fff" /><CellText>渐变色</CellText><DropBtn /></GridCell>
      <GridCell $white><CellText>否</CellText></GridCell>

      {Array.from({ length: emptyRows * 5 }, (_, i) => (
        <GridCell key={i} $first={i % 5 === 0} $white={i < 5} />
      ))}
      {Array.from({ length: 5 }, (_, i) => <GridStub key={i} $first={i === 0} />)}

      <Palette>
        <SwatchGrid $mb={11}>
          {PALETTE.map((c) => <Swatch key={c} $c={c} />)}
        </SwatchGrid>
        <SwatchGrid>
          {Array.from({ length: 16 }, (_, i) => <Swatch key={i} $c="#fff" />)}
        </SwatchGrid>
        <MoreColors>更多颜色</MoreColors>
      </Palette>
    </Grid>
  );
}

function ColorDialog() {
  return (
    <Dialog>
      <DialogTitle>颜色</DialogTitle>
      <DialogBody>
        <PickerCol>
          <ModeRow>
            <ModeChip />纯色
            <ModeActive><GradientChip />渐变色</ModeActive>
            水平
            <ModeCaret />
          </ModeRow>
          <StopRow>
            <Stop $line="#5050c0" $fill="#8f8fff" />
            <Stop $line="#aaa" $fill={`linear-gradient(90deg, #fff 55%, transparent 55%), ${CHECKER}`} />
          </StopRow>
          <RampBar />
          <ColorField><FieldKnob /></ColorField>
          <HueBar />
          <AlphaBar />
          <RgbRow>
            <RgbLabel>RGB</RgbLabel>
            <RgbFields>
              <RgbField>255</RgbField>
              <RgbField>255</RgbField>
              <RgbField>255</RgbField>
              <RgbField>100%</RgbField>
            </RgbFields>
          </RgbRow>
          <CustomHead>
            <CustomLabel>自定义</CustomLabel>
            <EditBtn $thick><Pencil size={10} strokeWidth={2} /></EditBtn>
            <EditBtn><Trash2 size={12} strokeWidth={1.8} /></EditBtn>
          </CustomHead>
          <CustomGrid>
            {Array.from({ length: 16 }, (_, i) => <CustomSlot key={i} />)}
          </CustomGrid>
        </PickerCol>
        <PreviewCol>
          <PreviewPanel>
            <PurpleDot />
            <Hexagon />
          </PreviewPanel>
          <PreviewBox>预</PreviewBox>
        </PreviewCol>
      </DialogBody>
    </Dialog>
  );
}

export default function App() {
  return (
    <Page>
      <GlobalStyle />
      <TitleBar>
        <Logo>HMI</Logo>
        <Menu>
          {MENU.map((m) => <MenuItem key={m}>{m}</MenuItem>)}
        </Menu>
        <DocPath>C:\Users\DELL\Documents\项目.hmismart</DocPath>
        <WindowBtns>
          <Minus size={14} strokeWidth={3} />
          <Win kind="restore" />
          <CloseSlot><X size={14} strokeWidth={2} /></CloseSlot>
        </WindowBtns>
      </TitleBar>
      <Toolbars />
      <Workspace>
        <LeftColumn>
          <ProjectPanel />
          <ObjectPanel />
        </LeftColumn>
        <CenterColumn>
          <TabStrip>
            <Tab>
              <TabIcon><ScreenRun /></TabIcon>
              画面_1
              <TabTools><Win kind="pin" /><X size={12} strokeWidth={2} /></TabTools>
            </Tab>
          </TabStrip>
          <CanvasView />
          <Inspector>
            <InspectorHead>IO 域_1 (IO 域)</InspectorHead>
            <InspectorBody>
              <NavList>
                {NAV.map((n) => (
                  <NavItem key={n.label} $sub={n.sub} $active={n.active}>
                    <NavSlot>
                      {n.kind === 'arrow'
                        ? <NavArrow size={10} strokeWidth={3} />
                        : <NavMarker $kind={n.kind} />}
                    </NavSlot>
                    {n.label}
                  </NavItem>
                ))}
              </NavList>
              <PropsArea>
                <PropertyForm />
                <AppearanceGrid />
              </PropsArea>
            </InspectorBody>
          </Inspector>
        </CenterColumn>
      </Workspace>
      <Thermo />
      <Watermark $x={508} $y={412} $size={40} $track={3}>西门子工业　找答案</Watermark>
      <Watermark $x={527} $y={468} $size={25} $track={0.5}>support.industry.siemens.com/cs</Watermark>
      <ColorDialog />
      <Ring $x={1034} $y={127} $w={221} $h={48} />
      <Ring $x={853} $y={458} $w={85} $h={30} />
      <Ring $x={892} $y={612} $w={67} $h={30} />
    </Page>
  );
}
